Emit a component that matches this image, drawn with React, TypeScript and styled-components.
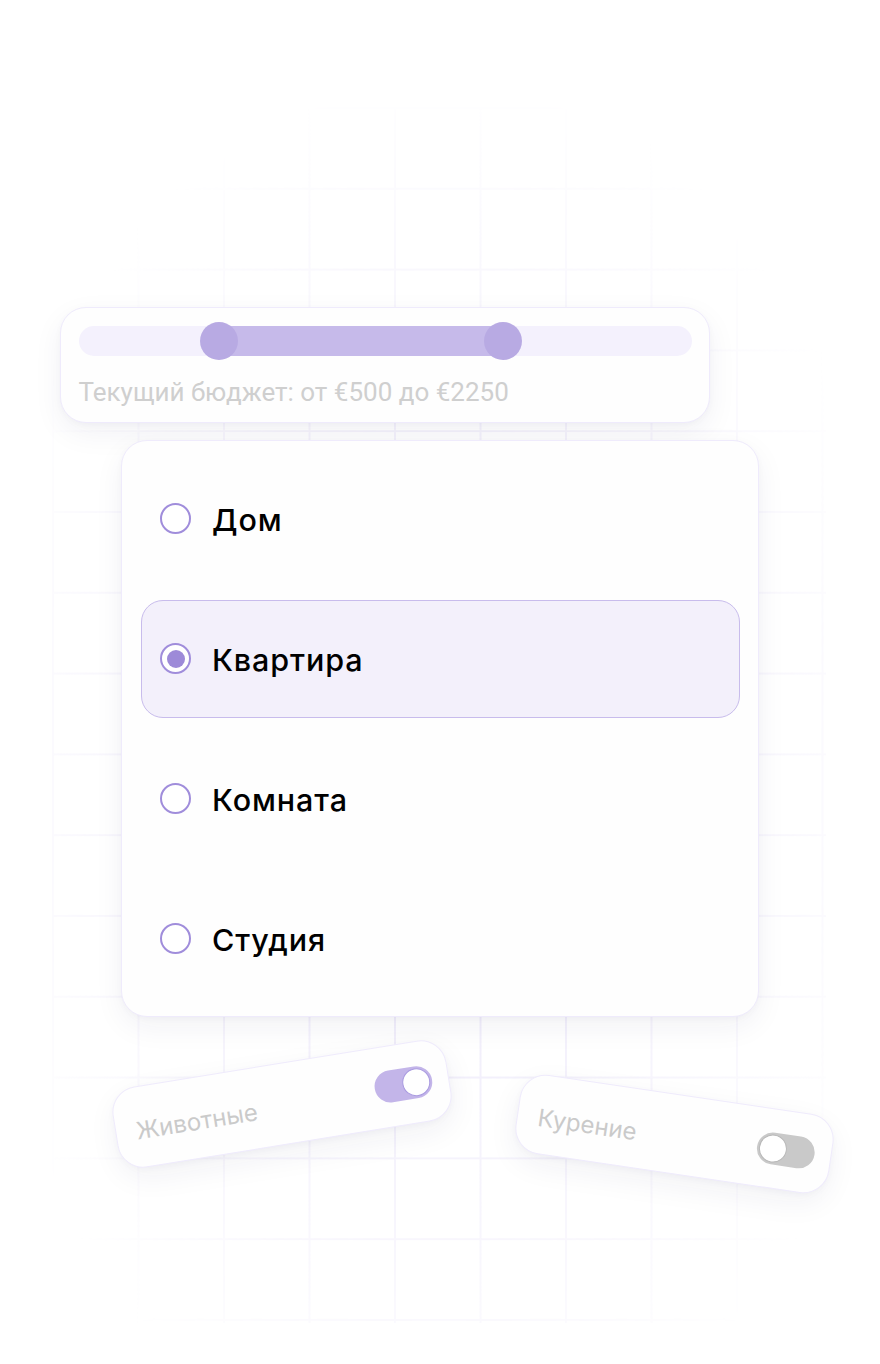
import React from "react";
import styled, { createGlobalStyle } from "styled-components";

const Global = createGlobalStyle`
  html, body { margin: 0; padding: 0; background: #ffffff; }
  body { font-family: Roboto, "Noto Sans", "Liberation Sans", sans-serif; }
  * { box-sizing: border-box; }
`;

const Page = styled.div`
  position: relative;
  width: 880px;
  height: 1364px;
  overflow: hidden;
  background: #ffffff;
`;

const GridBg = styled.div`
  position: absolute;
  left: 52px;
  top: 107px;
  width: 774px;
  height: 1216px;
  background-image:
    linear-gradient(to right, #f1eefb 2px, transparent 2px),
    linear-gradient(to bottom, #f1eefb 2px, transparent 2px);
  background-size: 85.5px 80.8px;
  -webkit-mask-image: radial-gradient(ellipse 62% 58% at 50% 55%, #000 35%, transparent 100%);
  mask-image: radial-gradient(ellipse 62% 58% at 50% 55%, #000 35%, transparent 100%);
`;

const Content = styled.div`
  position: relative;
  display: flex;
  flex-direction: column;
  padding-top: 307px;
`;

const Card = styled.div`
  background: #fefefe;
  border: 1.5px solid #efebfc;
  box-shadow: 0 10px 30px rgba(40, 30, 80, 0.06), 0 2px 6px rgba(40, 30, 80, 0.03);
`;

const SliderCard = styled(Card)`
  margin-left: 60px;
  width: 650px;
  border-radius: 26px;
  padding: 17.5px 17.5px 15.5px;
  display: flex;
  flex-direction: column;
  gap: 21px;
`;

const Track = styled.div`
  position: relative;
  height: 30px;
  border-radius: 15px;
  background: #f4f1fd;
`;

const Range = styled.div`
  position: absolute;
  top: 0;
  bottom: 0;
  background: #c6baea;
`;

const Thumb = styled.div`
  position: absolute;
  top: -4px;
  width: 38px;
  height: 38px;
  margin-left: -19px;
  border-radius: 50%;
  background: #b8aae3;
`;

const BudgetText = styled.div`
  font-size: 26px;
  line-height: 30px;
  color: #cfcfcf;
`;

const RadioCard = styled(Card)`
  margin-top: 17px;
  margin-left: 121px;
  width: 638px;
  border-radius: 26px;
  padding: 18.5px;
  display: flex;
  flex-direction: column;
  gap: 22px;
`;

const Option = styled.label<{ $selected: boolean }>`
  height: 118px;
  display: flex;
  align-items: center;
  gap: 21px;
  padding: 0 18.5px;
  border-radius: 22px;
  border: 1.5px solid ${(p) => (p.$selected ? "#c8bcec" : "transparent")};
  background: ${(p) => (p.$selected ? "#f3f0fb" : "transparent")};
  cursor: pointer;
`;

const RadioCircle = styled.span<{ $selected: boolean }>`
  width: 31px;
  height: 31px;
  border-radius: 50%;
  border: 2px solid #a08ddb;
  background: #ffffff;
  display: flex;
  align-items: center;
  justify-content: center;
  flex-shrink: 0;
  &::after {
    content: "";
    width: 18px;
    height: 18px;
    border-radius: 50%;
    background: #9d8ad8;
    display: ${(p) => (p.$selected ? "block" : "none")};
  }
`;

const OptionLabel = styled.span`
  font-family: Inter, Roboto, sans-serif;
  font-size: 30.5px;
  font-weight: 500;
  line-height: 36px;
  letter-spacing: 0.9px;
  color: #000000;
  margin-top: 2px;
`;

const ToggleRow = styled.div`
  display: flex;
  align-items: flex-start;
  margin-top: 46px;
  padding-left: 113px;
`;

const ToggleCard = styled(Card)<{ $w: number; $h: number; $rot: number; $dy: number; $ml: number }>`
  width: ${(p) => p.$w}px;
  height: ${(p) => p.$h}px;
  margin-top: ${(p) => p.$dy}px;
  margin-left: ${(p) => p.$ml}px;
  border-radius: 26px;
  padding: 0 16px 0 20px;
  display: flex;
  align-items: center;
  justify-content: space-between;
  transform: rotate(${(p) => p.$rot}deg);
  flex-shrink: 0;
`;

const ToggleLabel = styled.span`
  font-family: Inter, Roboto, sans-serif;
  font-size: 24px;
  color: #cacaca;
  margin-top: 6px;
`;

const Switch = styled.span<{ $on: boolean }>`
  width: 58px;
  height: 32px;
  border-radius: 16px;
  background: ${(p) => (p.$on ? "#c3b5e9" : "#c9c9c9")};
  display: flex;
  align-items: center;
  justify-content: ${(p) => (p.$on ? "flex-end" : "flex-start")};
  padding: 0 2px;
  &::after {
    content: "";
    width: 28px;
    height: 28px;
    border-radius: 50%;
    background: #ffffff;
    border: 1.5px solid ${(p) => (p.$on ? "#a99ae0" : "#b8b8b8")};
    box-sizing: border-box;
  }
`;

const options = ["Дом", "Квартира", "Комната", "Студия"];

export default function App() {
  const [selected, setSelected] = React.useState(1);
  const low = 23;
  const high = 69.2;
  return (
    <Page>
      <Global />
      <GridBg />
      <Content>
        <SliderCard>
          <Track>
            <Range style={{ left: `${low}%`, width: `${high - low}%` }} />
            <Thumb style={{ left: `${low}%` }} />
            <Thumb style={{ left: `${high}%` }} />
          </Track>
          <BudgetText>Текущий бюджет: от €500 до €2250</BudgetText>
        </SliderCard>
        <RadioCard>
          {options.map((o, i) => (
            <Option key={o} $selected={i === selected} onClick={() => setSelected(i)}>
              <RadioCircle $selected={i === selected} />
              <OptionLabel>{o}</OptionLabel>
            </Option>
          ))}
        </RadioCard>
        <ToggleRow>
          <ToggleCard $w={338} $h={82} $rot={-9.2} $dy={0} $ml={0}>
            <ToggleLabel>Животные</ToggleLabel>
            <Switch $on />
          </ToggleCard>
          <ToggleCard $w={317} $h={80} $rot={8.4} $dy={31} $ml={65}>
            <ToggleLabel>Курение</ToggleLabel>
            <Switch $on={false} />
          </ToggleCard>
        </ToggleRow>
      </Content>
    </Page>
  );
}
